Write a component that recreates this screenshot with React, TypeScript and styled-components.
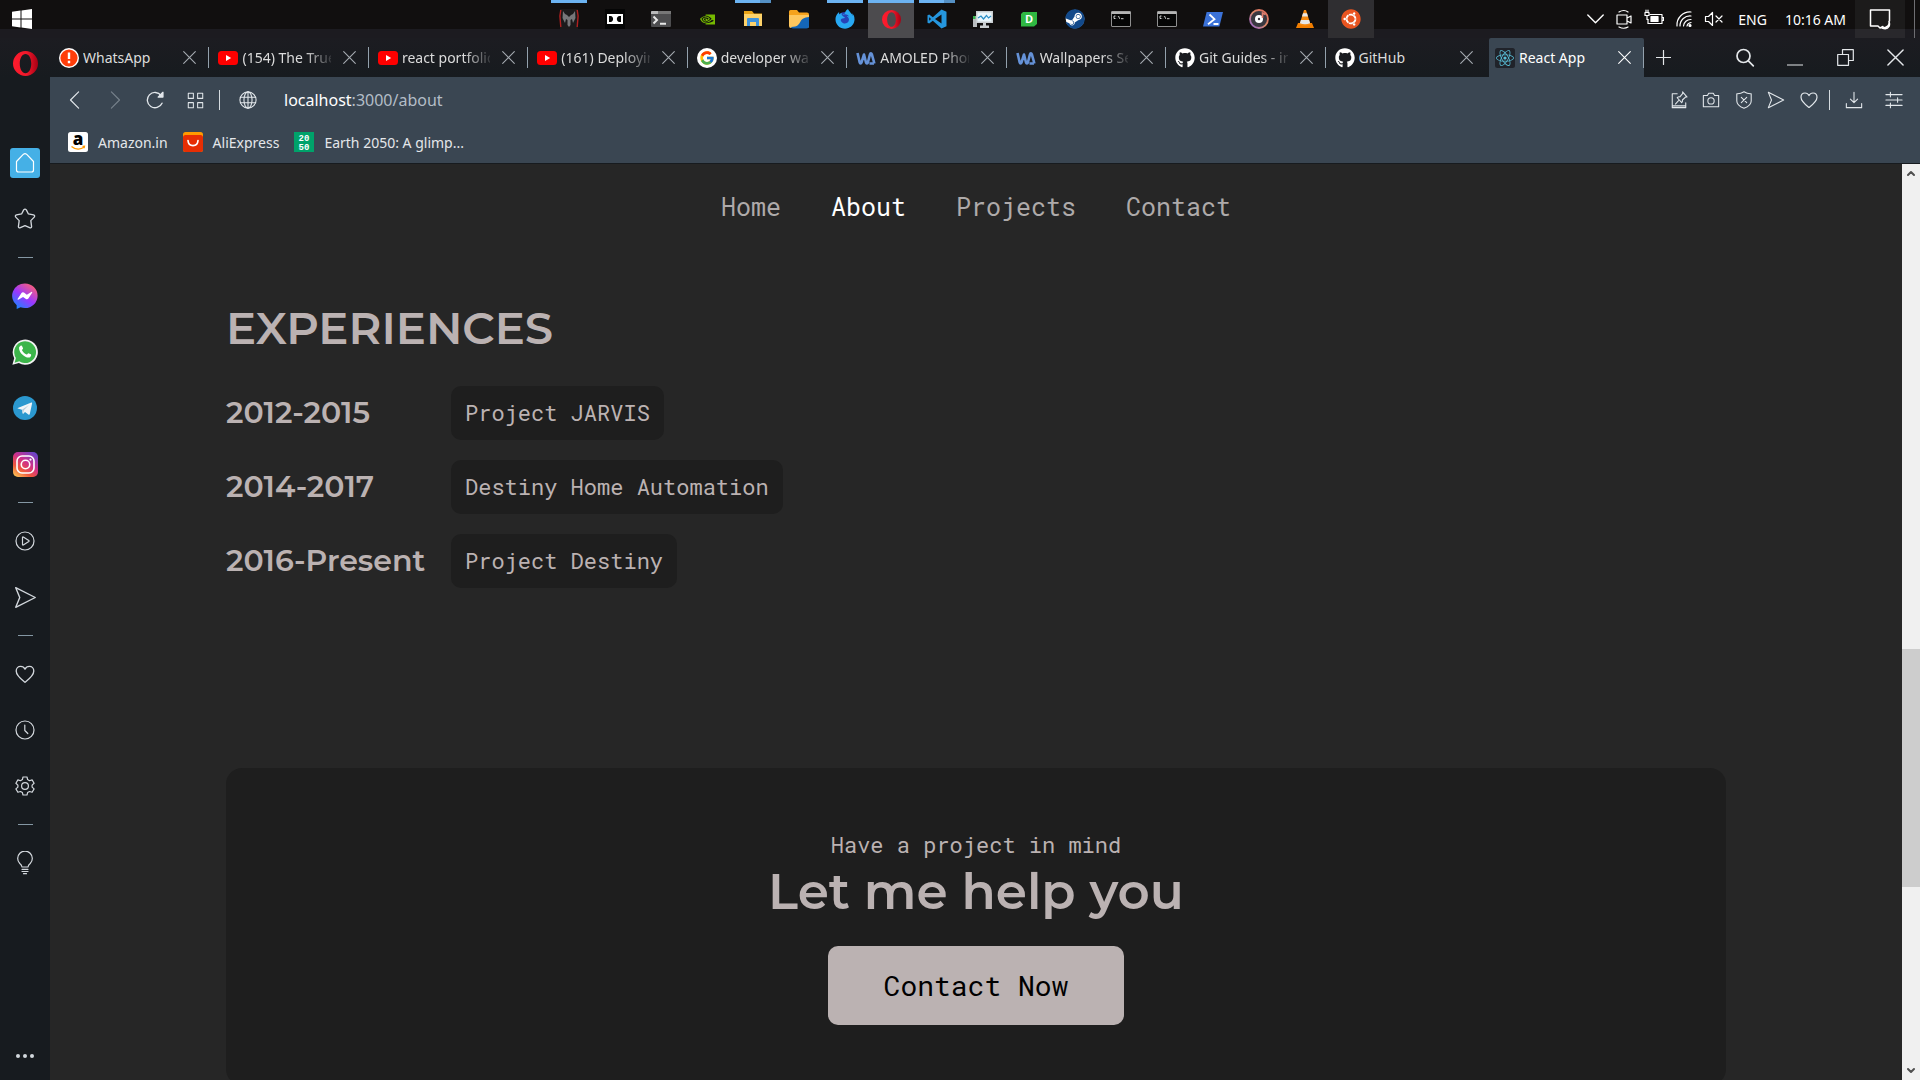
import React from "react";
import styled, { createGlobalStyle, css } from "styled-components";
import { FcGoogle } from "react-icons/fc";
import { FaGithub, FaSteam, FaFirefoxBrowser, FaWhatsapp, FaUbuntu, FaReact } from "react-icons/fa";
import { SiNvidia } from "react-icons/si";

const ui = `"Segoe UI", "Noto Sans", "Open Sans", sans-serif`;
const mono = `"Roboto Mono", "DejaVu Sans Mono", monospace`;
const display = `Montserrat, Inter, sans-serif`;

const Global = createGlobalStyle`
  *, *::before, *::after { box-sizing: border-box; }
  body { margin: 0; background: #262626; overflow: hidden; }
  button { border: 0; margin: 0; padding: 0; background: none; color: inherit; font: inherit; cursor: pointer; }
  a { color: inherit; text-decoration: none; }
  svg { display: block; flex: none; }
  h2, p, ul, dl, dt, dd { margin: 0; padding: 0; }
  ul { list-style: none; }
`;

/* ---------- desktop frame ---------- */

const Desktop = styled.div`
  display: flex;
  flex-direction: column;
  height: 100vh;
  overflow: hidden;
  font-family: ${ui};
  color: #e4e7ea;
`;

const Taskbar = styled.header`
  display: flex;
  flex: none;
  height: 38px;
  background: linear-gradient(#110f0f 29px, #1c1b20 29px);
`;

const TaskSide = styled.div<{ $end?: boolean }>`
  display: flex;
  flex: 1 1 0;
  justify-content: ${(p) => (p.$end ? "flex-end" : "flex-start")};
  color: #fff;
`;

const StartButton = styled.button`
  width: 44px;
  display: grid;
  place-items: center;
`;

const TaskApps = styled.nav`
  display: flex;
`;

const TaskButton = styled.button<{ $active?: boolean; $soft?: boolean }>`
  position: relative;
  display: grid;
  place-items: center;
  width: 46px;
  height: 38px;
  ${(p) => p.$active && css`background: #4c4b4e;`}
  ${(p) => p.$soft && css`background: #2f2e31;`}
`;

const Indicator = styled.span<{ $kind: string }>`
  position: absolute;
  top: 0;
  left: ${(p) => (p.$kind === "wide" ? "0" : "5px")};
  right: ${(p) => (p.$kind === "wide" ? "0" : "5px")};
  height: 3px;
  background: ${(p) =>
    p.$kind === "stack" ? "linear-gradient(90deg, #6cb3f2 25px, #5590c4 25px)" : "#6cb3f2"};
`;

const Tray = styled.div`
  display: flex;
  align-items: center;
  gap: 10px;
  font-size: 14px;
  white-space: nowrap;
  padding-right: 9px;
`;

const Lang = styled.span`
  padding: 0 8px 0 4px;
`;

const Notice = styled.button`
  display: grid;
  place-items: center;
  width: 50px;
  height: 38px;
  background: linear-gradient(#1c1b1b 29px, #29282c 29px);
`;

const PeekLine = styled.span`
  width: 6px;
  margin: 0 0 0 9px;
  border-left: 1px solid #6e6e72;
`;

/* ---------- browser ---------- */

const Browser = styled.div`
  display: flex;
  flex: 1;
  min-height: 0;
`;

const Sidebar = styled.aside`
  display: flex;
  flex-direction: column;
  align-items: center;
  flex: none;
  width: 50px;
  background: linear-gradient(#1c1c21, #171b1f 40px);
  color: #d3d8dd;
`;

const OperaMenu = styled.button`
  display: grid;
  place-items: center;
  width: 50px;
  height: 50px;
  margin-bottom: 9px;
`;

const SideButton = styled.button`
  display: grid;
  place-items: center;
  width: 50px;
  height: 56px;
`;

const HomeTile = styled.span`
  display: grid;
  place-items: center;
  width: 30px;
  height: 30px;
  border-radius: 3px;
  background: #45b0e6;
  color: #fff;
`;

const Divider = styled.hr`
  width: 15px;
  height: 1px;
  margin: 10px 0;
  border: 0;
  background: #8497a3;
`;

const MoreButton = styled(SideButton)`
  margin-top: auto;
  height: 48px;
`;

const SideTop = styled.div`
  display: flex;
  flex-direction: column;
  align-items: center;
`;

const Window = styled.div`
  display: flex;
  flex-direction: column;
  flex: 1;
  min-width: 0;
`;

const TabStrip = styled.div`
  display: flex;
  flex: none;
  height: 39px;
  background: linear-gradient(#1c1c21, #171b1f);
`;

const TabList = styled.div`
  display: flex;
  flex: 1 1 0;
  max-width: 1435px;
  min-width: 0;
`;

const Tab = styled.div<{ $active?: boolean }>`
  position: relative;
  display: flex;
  align-items: center;
  flex: 1 1 0;
  min-width: 0;
  padding-left: 9px;
  font-size: 14px;
  color: #dcdcdc;

  &:not(:last-child)::after {
    content: "";
    width: 1px;
    height: 21px;
    background: #93a1ad;
  }

  ${(p) =>
    p.$active &&
    css`
      flex: 0 0 155px;
      margin-left: 4px;
      padding-left: 6px;
      background: #3a4652;
      border-radius: 2px 2px 0 0;
      color: #fff;
    `}
`;

const TabTitle = styled.button`
  display: flex;
  align-items: center;
  gap: 4px;
  flex: 1;
  min-width: 0;
  white-space: nowrap;
  text-align: left;
`;

const TabText = styled.span<{ $fade?: boolean }>`
  flex: 1;
  overflow: hidden;
  ${(p) => p.$fade && css`mask-image: linear-gradient(90deg, #000 70%, rgba(0, 0, 0, 0.15));`}
`;

const TabClose = styled.button<{ $bright?: boolean }>`
  display: grid;
  place-items: center;
  width: 37px;
  height: 30px;
  color: ${(p) => (p.$bright ? "#fff" : "#a5abb1")};
`;

const NewTab = styled.button`
  display: grid;
  place-items: center;
  width: 38px;
`;

const WindowControls = styled.div`
  display: flex;
  margin-left: auto;
`;

const WindowButton = styled.button`
  display: grid;
  place-items: center;
  width: 50px;
`;

const Toolbar = styled.div`
  flex: none;
  background: #3a4652;
  border-bottom: 1px solid #171b1f;
`;

const AddressRow = styled.div`
  display: flex;
  align-items: center;
  height: 46px;
  padding: 0 6px 0 5px;
  color: #e2e7eb;
`;

const ToolButton = styled.button<{ $w?: number; $dim?: boolean }>`
  display: grid;
  place-items: center;
  width: ${(p) => p.$w ?? 40}px;
  height: 32px;
  color: ${(p) => (p.$dim ? "#76818b" : "#e2e7eb")};
`;

const ToolRule = styled.span`
  width: 1px;
  height: 20px;
  margin: 0 4px;
  background: #d5dbe0;
`;

const Address = styled.div`
  flex: 1;
  padding-left: 12px;
  font-size: 16px;
  color: #b3bdc7;
`;

const Host = styled.span`
  color: #fff;
`;

const Bookmarks = styled.nav`
  display: flex;
  gap: 15px;
  height: 40px;
  padding: 0 18px;
  font-size: 14px;
`;

const Bookmark = styled.a`
  display: flex;
  align-items: center;
  gap: 10px;
  padding-bottom: 2px;
`;

/* ---------- page ---------- */

const Viewport = styled.div`
  display: flex;
  flex: 1;
  min-height: 0;
`;

const Page = styled.main`
  flex: 1;
  min-width: 0;
  overflow: hidden;
  background: #262626;
  color: #bbb2b2;
  font-family: ${mono};
`;

const SiteNav = styled.nav`
  display: flex;
  justify-content: center;
  gap: 50px;
  padding: 26px 0;
  font-size: 25px;
  line-height: 34px;
`;

const NavLink = styled.a<{ $current?: boolean }>`
  color: ${(p) => (p.$current ? "#fff" : "#aeaaaa")};
`;

const Container = styled.div`
  width: 81%;
  max-width: 1500px;
  margin: 0 auto;
`;

const Heading = styled.h2`
  margin: 48px 0 28px;
  font-family: ${display};
  font-size: 45px;
  font-weight: 600;
  line-height: 60px;
`;

const Timeline = styled.dl`
  display: grid;
  grid-template-columns: minmax(200px, max-content) 1fr;
  gap: 20px 25px;
  align-items: center;
  justify-items: start;
`;

const Years = styled.dt`
  font-family: ${display};
  font-size: 30px;
  font-weight: 600;
  line-height: 40px;
`;

const Role = styled.dd`
  padding: 12px 14px;
  border-radius: 10px;
  background: #1e1e1e;
  font-size: 22px;
  line-height: 30px;
`;

const CallToAction = styled.section`
  display: flex;
  flex-direction: column;
  align-items: center;
  margin-top: 180px;
  padding: 60px 0;
  border-radius: 16px;
  background: #1e1e1e;
`;

const Lead = styled.p`
  font-size: 22px;
  line-height: 34px;
`;

const Pitch = styled.h2`
  margin-bottom: 24px;
  font-family: ${display};
  font-size: 50px;
  font-weight: 600;
  line-height: 60px;
`;

const ContactButton = styled.button`
  padding: 20px 56px;
  border-radius: 10px;
  background: #bbb2b2;
  color: #000;
  font-size: 28px;
  line-height: 39px;
`;

const Scrollbar = styled.div`
  display: flex;
  flex-direction: column;
  flex: none;
  width: 18px;
  background: #f0f0f0;
`;

const ScrollArrow = styled.button`
  display: grid;
  place-items: center;
  height: 18px;
  color: #505050;
`;

const Track = styled.div`
  display: grid;
  grid-template-rows: 467fr 238fr 175fr;
  flex: 1;
`;

const Thumb = styled.div`
  grid-row: 2;
  background: #cdcdcd;
`;

/* ---------- drawings ---------- */

type LineProps = { size?: number; w?: number; h?: number; box?: string; sw?: number; children: React.ReactNode };
const Line = ({ size = 20, box = "0 0 20 20", sw = 1.2, w, h, children }: LineProps) => (
  <svg width={w ?? size} height={h ?? size} viewBox={box} fill="none" stroke="currentColor" strokeWidth={sw} strokeLinejoin="round" strokeLinecap="round" aria-hidden="true">
    {children}
  </svg>
);
const Pic = ({ size = 20, children }: { size?: number; children: React.ReactNode }) => (
  <svg width={size} height={size} viewBox="0 0 20 20" aria-hidden="true">{children}</svg>
);

const CrossIcon = ({ size = 13 }: { size?: number }) => (
  <Line size={size} box="0 0 13 13" sw={1.1}><path d="M.7.7l11.6 11.6M12.3.7L.7 12.3" /></Line>
);
const HeartPath = () => (
  <path d="M10 17.5C6.5 14.8 2 11.500 2 7.300 2 4.700 3.800 3 6 3c1.800 0 3.200.9 4 2.600C10.800 3.900 12.200 3 14 3c2.200 0 4 1.700 4 4.300 0 4.200-4.500 7.500-8 10.200z" />
);

const OperaLogo = ({ size = 25, id }: { size?: number; id: string }) => (
  <Pic size={size}>
    <defs>
      <linearGradient id={id} x1="0" x2="1" y1="0" y2="0">
        <stop offset="0" stopColor="#ff1b2d" />
        <stop offset=".55" stopColor="#f0192b" />
        <stop offset="1" stopColor="#a70014" />
      </linearGradient>
    </defs>
    <path fillRule="evenodd" fill={`url(#${id})`} d="M10 0a10 10 0 1 0 0 20 10 10 0 0 0 0-20zm0 2.300c2.700 0 4.600 3.300 4.600 7.700s-1.900 7.700-4.600 7.700S5.400 14.400 5.400 10 7.300 2.300 10 2.300z" />
  </Pic>
);

const YouTube = () => (
  <Pic>
    <rect x="0" y="3" width="20" height="14" rx="3.500" fill="#f00" />
    <path d="M8 7l5.200 3L8 13z" fill="#fff" />
  </Pic>
);
const Alert = () => (
  <Pic>
    <circle cx="10" cy="10" r="10" fill="#fff" />
    <circle cx="10" cy="10" r="8.600" fill="#ff3d0a" />
    <path d="M8.800 4.500h2.400v6.500H8.800zM8.800 12.800h2.400v2.400H8.800z" fill="#fff" />
  </Pic>
);
const Google = () => (
  <Pic>
    <circle cx="10" cy="10" r="10" fill="#fff" />
    <FcGoogle x="2" y="2" width="16" height="16" size={16} />
  </Pic>
);
const WallpaperLogo = () => (
  <Pic>
    <path d="M1.500 5l2.200 9.500c.3 1.200 1.400 1.200 1.800 0L8 6.500l2 8c.4 1.200 1.500 1.200 1.900 0L14 6.200c.3-1.100 1.400-1.100 1.800 0l2.600 9.300M13.500 15.500h4.500" fill="none" stroke="#6592d8" strokeWidth="2.600" strokeLinejoin="round" />
  </Pic>
);
const ReactTile = () => (
  <Pic>
    <rect width="20" height="20" rx="2.500" fill="#20232a" />
    <FaReact x="1" y="1" size={18} color="#58bdd6" />
  </Pic>
);
const GitHub = () => <FaGithub size={20} color="#fff" />;

const Amazon = () => (
  <Pic>
    <rect width="20" height="20" rx="2.500" fill="#fff" />
    <text x="10" y="13" textAnchor="middle" fontFamily="Open Sans, sans-serif" fontWeight="800" fontSize="17" fill="#000">a</text>
    <path d="M3.500 14.500c4 3.200 9 3.200 12.500.8M14.500 14.300l2-.1-.4 2" fill="none" stroke="#f90" strokeWidth="1.300" />
  </Pic>
);
const AliExpress = () => (
  <Pic>
    <rect width="20" height="20" rx="2.500" fill="#ff9a00" />
    <path d="M0 5.500q0-2.500 2.500-2.500h15q2.500 0 2.500 2.500v12q0 2.500-2.500 2.500h-15q-2.500 0-2.500-2.500z" fill="#e62e04" />
    <path d="M5 8.500c.5 6.800 9.500 6.800 10 0" fill="none" stroke="#fff" strokeWidth="1.700" strokeLinecap="round" />
  </Pic>
);
const Earth = () => (
  <Pic>
    <rect width="20" height="20" fill="#00a26a" />
    <g fontFamily="Liberation Mono, monospace" fontWeight="700" fontSize="9" fill="#fff" textAnchor="middle">
      <text x="10" y="9">20</text>
      <text x="10" y="18">50</text>
    </g>
  </Pic>
);

const Predator = () => (
  <Pic>
    <rect x="1" width="18" height="20" fill="#1b1a1b" />
    <path d="M1.800 1l-.9 6 .9 11M18.200 1l.9 6-.9 11" fill="none" stroke="#b02020" strokeWidth="1.400" />
    <path d="M4 2l2 3 2 1 2 2 2-2 2-1 2-3 .5 7-2.500 5-1-4-1.500 1v5L10 18l-1.500-2v-5L7 10l-1 4-2.500-5z" fill="#77777a" />
  </Pic>
);
const Dolby = () => (
  <Pic>
    <rect width="20" height="20" fill="#050505" />
    <rect x="2" y="5" width="16" height="10" fill="#fff" />
    <path d="M4 7h1.500c3.500 0 3.500 6 0 6H4zM16 7h-1.500c-3.500 0-3.500 6 0 6H16z" fill="#050505" />
  </Pic>
);
const Terminal = () => (
  <Pic>
    <rect y="2" width="20" height="16" rx="1" fill="#4d4d4f" />
    <path d="M1 2h18q1 0 1 1v2H0V3q0-1 1-1z" fill="#b9b9ba" />
    <path d="M7 2h13v3H7z" fill="#777" />
    <path d="M2.500 7.500L6 11l-3.500 3.500M9 14.700h6" fill="none" stroke="#e8e8e8" strokeWidth="2" />
  </Pic>
);
const Explorer = () => (
  <Pic>
    <path d="M1 2h8l2 2.500h8V8H1z" fill="#e8a317" />
    <path d="M1 5h18v12H1z" fill="#fdd26a" />
    <path d="M4 17v-7q0-1 1-1h10q1 0 1 1v7h-3v-4H7v4z" fill="#3f93dc" />
  </Pic>
);
const FilesApp = () => (
  <Pic>
    <path d="M0 2.500Q0 1 1.500 1H8l2 2.500h8q2 0 2 2V12H0z" fill="#f5a21c" />
    <path d="M0 6h20v11q0 2-2 2H2q-2 0-2-2z" fill="#fec75e" />
    <path d="M2 18c7 0 8-3 9.500-5.500S15 8.500 20 8v9q0 2.500-2.500 2.500H4Q2.500 19.500 2 18z" fill="#1466b8" />
  </Pic>
);
const Firefox = () => (
  <Pic>
    <circle cx="10" cy="11" r="8" fill="#2743b8" />
    <FaFirefoxBrowser size={20} color="#27a8f2" />
  </Pic>
);
const VSCode = () => (
  <Pic>
    <path d="M14.500.5L5.800 8.300 2.200 5.500.5 6.300v7.400l1.700.8 3.600-2.800 8.700 7.800 5-2.300V2.800zM2.200 11.800V8.200L4 10zM8 10l6.500-4.600v9.200z" fillRule="evenodd" fill="#2596dd" />
  </Pic>
);
const Monitor = () => (
  <Pic>
    <path d="M0 7h4v11H0z" fill="#b9bdbf" />
    <path d="M0 7h2.500v3H0z" fill="#36b24a" />
    <rect x="3" y="2" width="17" height="12" fill="#c9ced1" />
    <rect x="4.500" y="3.500" width="14" height="9" fill="#eaf6fc" />
    <path d="M5 9l3-2 2.500 3 3-3.500 2 2.500 2.500-2" fill="none" stroke="#2a8fc7" strokeWidth="1.200" />
    <path d="M10 14h3v2.500h3V19H7v-2.500h3z" fill="#c9ced1" />
  </Pic>
);
const DApp = () => (
  <Pic>
    <path d="M2 5l2-2h14v12l-3 2.500H2z" fill="#2fb842" />
    <text x="10" y="14" textAnchor="middle" fontFamily="Open Sans, sans-serif" fontWeight="700" fontSize="11" fill="#fff">D</text>
  </Pic>
);
const Steam = () => (
  <Pic>
    <circle cx="10" cy="10" r="9.300" fill="#fff" />
    <FaSteam size={20} color="#12498a" />
  </Pic>
);
const Cmd = () => (
  <Pic>
    <rect x=".5" y="2.500" width="19" height="15" rx=".5" fill="#050505" stroke="#8f8f8f" />
    <path d="M.5 2.500h19v2.500H.5z" fill="#b5b5b5" />
    <path d="M4.500 7H3v2.500h1.500M6 7.500v.2M6 9.300v.2M7.500 7l1.200 2.800M10 9.700h2.500" stroke="#e6e6e6" fill="none" strokeWidth=".9" />
  </Pic>
);
const PowerShell = () => (
  <Pic>
    <path d="M3.600 3H20l-3.600 14.500H0z" fill="#3b72d8" />
    <path d="M6.500 5.500l5 4.700-6.500 5M10.500 15h5" fill="none" stroke="#fff" strokeWidth="1.800" />
  </Pic>
);
const MusicApp = () => (
  <Pic>
    <defs>
      <linearGradient id="music" x1="0" x2="1" y1="1" y2="0">
        <stop offset="0" stopColor="#8e62d6" />
        <stop offset=".5" stopColor="#d98a6a" />
        <stop offset="1" stopColor="#e46a5c" />
      </linearGradient>
    </defs>
    <circle cx="10" cy="10" r="9" fill="#3a3840" stroke="url(#music)" strokeWidth="1.800" />
    <circle cx="10" cy="10" r="4" fill="#fff" />
    <circle cx="10" cy="10" r="1.200" fill="#3a3840" />
    <path d="M13.500 9V4l3 1.500" fill="none" stroke="#e08070" strokeWidth="1.600" />
  </Pic>
);
const Vlc = () => (
  <Pic>
    <path d="M3 14h14l2 5H1z" fill="#f07d00" />
    <path d="M9 1h2l4.500 14.500q-5.500 2.500-11 0z" fill="#f58a12" />
    <path d="M8 4.200h4l1 3.300H7zM5.900 11h8.200l1 3.200q-5 2-10.200 0z" fill="#e8e8e8" />
  </Pic>
);
const Ubuntu = () => (
  <Pic>
    <circle cx="10" cy="10" r="9" fill="#fff" />
    <FaUbuntu size={20} color="#e95420" />
  </Pic>
);

const Messenger = () => (
  <Pic size={26}>
    <defs>
      <linearGradient id="msgr" x1=".1" x2=".8" y1="1" y2="0">
        <stop offset="0" stopColor="#0a8dff" />
        <stop offset=".5" stopColor="#9b37ff" />
        <stop offset="1" stopColor="#ff6270" />
      </linearGradient>
    </defs>
    <path d="M10 .3a9.700 9.500 0 0 1 0 19q-1.800 0-3.400-.6L3.600 20v-2.900A9.700 9.500 0 0 1 10 .3z" fill="url(#msgr)" />
    <path d="M4.300 12.400l3-4.700q.8-1 1.900-.3l2.200 1.700 3.800-2.300q.6 0 .3.700l-2.900 4.500q-.8 1-1.900.3L8.500 10.700l-3.700 2.200q-.7.100-.5-.5z" fill="#fff" />
  </Pic>
);
const WhatsApp = () => (
  <Pic size={26}>
    <path d="M.3 19.800l1.400-5A9.700 9.700 0 1 1 5.300 18.500z" fill="#f2f2f2" />
    <path d="M2 18.200l1-3.600A8.400 8.400 0 1 1 5.600 17.200z" fill="#3cb54a" />
    <path d="M6.600 5.200c.5-.3 1-.2 1.200.3l.7 1.700c.1.500-.8 1.200-.8 1.500.7 1.500 1.900 2.600 3.500 3.300.5 0 1-1.100 1.400-1.100l1.900.9c.6.400 0 1.800-.6 2.200-2.500 1.500-8.600-2.800-8.500-7.100 0-.7.600-1.400 1.200-1.700z" fill="#fff" />
  </Pic>
);
const Telegram = () => (
  <Pic size={24}>
    <circle cx="10" cy="10" r="10" fill="#2b98cf" />
    <path d="M4 10l11.300-4.500q.8-.2.600.8l-1.900 8.700q-.3 1-1.200.4L10 13.300l-1.400 1.400q-.6.400-.7-.5L7.500 11.500 4 10.400q-.4-.2 0-.4z" fill="#f1f5f8" />
    <path d="M7.500 11.500l5.800-4L9 11.900l-.6 2.600z" fill="#b8ccd9" />
  </Pic>
);
const Instagram = () => (
  <Pic size={25}>
    <defs>
      <linearGradient id="insta" x1=".1" x2=".8" y1="1" y2="0">
        <stop offset="0" stopColor="#fdc856" />
        <stop offset=".3" stopColor="#f0583c" />
        <stop offset=".6" stopColor="#cf2f8a" />
        <stop offset="1" stopColor="#6a45c9" />
      </linearGradient>
    </defs>
    <rect width="20" height="20" rx="4" fill="url(#insta)" />
    <g fill="none" stroke="#fff" strokeWidth="1.300">
      <rect x="3.200" y="3.200" width="13.600" height="13.600" rx="4" />
      <circle cx="10" cy="10" r="3.400" />
    </g>
    <circle cx="14" cy="6" r=".9" fill="#fff" />
  </Pic>
);

const SendIcon = ({ size = 20 }: { size?: number }) => (
  <Line size={size}><path d="M1.500 1.500L18.500 10l-17 8.500L5 10z" /></Line>
);

const taskApps: { name: string; icon: React.ReactNode; mark?: string; active?: boolean; soft?: boolean }[] = [
  { name: "PredatorSense", icon: <Predator />, mark: "full" },
  { name: "Dolby Access", icon: <Dolby /> },
  { name: "Windows Terminal", icon: <Terminal /> },
  { name: "NVIDIA", icon: <SiNvidia size={15} color="#76b900" /> },
  { name: "File Explorer", icon: <Explorer />, mark: "stack" },
  { name: "Files", icon: <FilesApp /> },
  { name: "Firefox", icon: <Firefox />, mark: "full" },
  { name: "Opera", icon: <OperaLogo size={19} id="opera-task" />, mark: "wide", active: true },
  { name: "Visual Studio Code", icon: <VSCode />, mark: "stack" },
  { name: "Performance Monitor", icon: <Monitor /> },
  { name: "Dashboard", icon: <DApp /> },
  { name: "Steam", icon: <Steam /> },
  { name: "Command Prompt", icon: <Cmd /> },
  { name: "Developer Prompt", icon: <Cmd /> },
  { name: "PowerShell", icon: <PowerShell /> },
  { name: "Music", icon: <MusicApp /> },
  { name: "VLC", icon: <Vlc /> },
  { name: "Ubuntu", icon: <Ubuntu />, soft: true },
];

const tabs = [
  { title: "WhatsApp", icon: <Alert /> },
  { title: "(154) The True", icon: <YouTube />, fade: true },
  { title: "react portfolio", icon: <YouTube />, fade: true },
  { title: "(161) Deploying", icon: <YouTube />, fade: true },
  { title: "developer wallpaper", icon: <Google />, fade: true },
  { title: "AMOLED Phone", icon: <WallpaperLogo />, fade: true },
  { title: "Wallpapers Search", icon: <WallpaperLogo />, fade: true },
  { title: "Git Guides - install", icon: <GitHub />, fade: true },
  { title: "GitHub", icon: <GitHub /> },
];

const experiences = [
  ["2012-2015", "Project JARVIS"],
  ["2014-2017", "Destiny Home Automation"],
  ["2016-Present", "Project Destiny"],
];

const SystemTaskbar = () => (
  <Taskbar>
    <TaskSide>
      <StartButton aria-label="Start">
        <Pic>
          <path d="M0 2.800L8.500 1.600V9.500H0zM9.500 1.400L20 0v9.500H9.500zM0 10.500h8.500v7.900L0 17.200zM9.500 10.500H20V20L9.500 18.600z" fill="#fff" />
        </Pic>
      </StartButton>
    </TaskSide>
    <TaskApps aria-label="Taskbar">
      {taskApps.map((a) => (
        <TaskButton key={a.name} aria-label={a.name} $active={a.active} $soft={a.soft}>
          {a.mark && <Indicator $kind={a.mark} />}
          {a.icon}
        </TaskButton>
      ))}
    </TaskApps>
    <TaskSide $end>
      <Tray>
        <Line w={17} h={20} box="0 0 17 20" sw={1.4}><path d="M.8 6l7.700 7.700L16.200 6" /></Line>
        <Line><path d="M3 6h10v9H3zM13 9l4-2v7l-4-2M5 3q5-3 9 0M5 18q5 2.500 9 0" /></Line>
        <Line>
          <path d="M6 5.500h12v9H4v-4M18.200 8.500h1.300v3h-1.300" />
          <path d="M1 3.500h4v3H1zM2 3.500V1M4 3.500V1M3 6.500v4h1" />
          <path d="M7 7.500h7v5H7z" fill="currentColor" />
        </Line>
        <Line>
          <path d="M3 17A13 13 0 0 1 17 3M6 17A10 10 0 0 1 17 7M9.500 17A7 7 0 0 1 17 10.500M13 17q.5-3 4-3.500" />
          <circle cx="16" cy="16.500" r="1" fill="currentColor" />
        </Line>
        <Line><path d="M1.500 7.500h3l4-4v13l-4-4h-3zM12 7l6 6M18 7l-6 6" /></Line>
        <Lang>ENG</Lang>
        <time>10:16 AM</time>
      </Tray>
      <Notice aria-label="Notifications">
        <Line w={22} h={22} box="0 0 22 22" sw={1.500}>
          <path d="M14 18.500l-3 1.500-2-2H1.500v-16h19V13" />
          <path d="M20 13.500q1 6-7 6.500 5 2 7-1.500 1-2.500 0-5z" />
        </Line>
      </Notice>
      <PeekLine />
    </TaskSide>
  </Taskbar>
);

const OperaSidebar = () => (
  <Sidebar>
    <SideTop>
      <OperaMenu aria-label="Opera menu"><OperaLogo id="opera-side" /></OperaMenu>
    </SideTop>
    <SideTop>
      <Spacer />
      <SideButton aria-label="Home">
        <HomeTile>
          <Line><path d="M1.500 8.500L8.500 1.200q1.500-1 3 0l7 7.300v8.500q0 2-2 2h-13q-2 0-2-2z" /></Line>
        </HomeTile>
      </SideButton>
      <SideButton aria-label="Bookmarks">
        <Line size={22}>
          <path d="M8.800 1.700q1.200-1.400 2.400 0l1.900 3.700 4.600.8q1.700.7.700 2.100l-3.100 3.200.7 5.400q-.2 1.500-1.800 1L10 16l-4.200 1.900q-1.600.5-1.800-1l.7-5.400-3.100-3.200q-1-1.400.7-2.100l4.600-.8z" />
        </Line>
      </SideButton>
      <Divider />
      <SideButton aria-label="Messenger"><Messenger /></SideButton>
      <SideButton aria-label="WhatsApp"><WhatsApp /></SideButton>
      <SideButton aria-label="Telegram"><Telegram /></SideButton>
      <SideButton aria-label="Instagram"><Instagram /></SideButton>
      <Divider />
      <SideButton aria-label="Player">
        <Line><circle cx="10" cy="10" r="9" /><path d="M7.500 6.500q0-.8.800-.5l5.500 3.500q.6.500 0 1L8.300 14q-.8.300-.8-.5z" /></Line>
      </SideButton>
      <SideButton aria-label="My Flow"><SendIcon size={23} /></SideButton>
      <Divider />
      <SideButton aria-label="Favourites"><Line size={22}><HeartPath /></Line></SideButton>
      <SideButton aria-label="History">
        <Line><circle cx="10" cy="10" r="9" /><path d="M9.800 5v5.500l3 3" /></Line>
      </SideButton>
      <SideButton aria-label="Settings">
        <Line>
          <path d="M8 1h4l.6 2.600 1.900 1.100 2.600-.8 2 3.400-2 1.800v2l2 1.800-2 3.400-2.600-.8-1.900 1.100L12 19H8l-.6-2.400-1.900-1.100-2.600.8-2-3.400 2-1.800v-2l-2-1.800 2-3.400 2.600.8 1.900-1.100z" />
          <circle cx="10" cy="10" r="3.400" />
        </Line>
      </SideButton>
      <Divider />
      <SideButton aria-label="Tips">
        <Line w={20} h={24} box="0 0 20 24">
          <path d="M7 16q-.3-2-2.200-3.500A7.300 7.300 0 1 1 15.200 12.500Q13.300 14 13 16zM7 18.300h6M7 20.500h6M8.500 22.700h3" />
        </Line>
      </SideButton>
    </SideTop>
    <MoreButton aria-label="More">
      <svg width="20" height="6" viewBox="0 0 20 6" fill="currentColor" aria-hidden="true">
        <circle cx="3" cy="3" r="2" /><circle cx="10" cy="3" r="2" /><circle cx="17" cy="3" r="2" />
      </svg>
    </MoreButton>
  </Sidebar>
);

const Spacer = styled.div`
  height: 38px;
`;

const BrowserTabs = () => (
  <TabStrip>
    <TabList>
      {tabs.map((t, i) => (
        <Tab key={i}>
          <TabTitle>{t.icon}<TabText $fade={t.fade}>{t.title}</TabText></TabTitle>
          <TabClose aria-label={`Close ${t.title}`}><CrossIcon /></TabClose>
        </Tab>
      ))}
    </TabList>
    <Tab $active>
      <TabTitle><ReactTile /><TabText>React App</TabText></TabTitle>
      <TabClose $bright aria-label="Close React App"><CrossIcon /></TabClose>
    </Tab>
    <NewTab aria-label="New tab"><Line size={15} box="0 0 15 15"><path d="M7.500.5v14M.5 7.500h14" /></Line></NewTab>
    <WindowControls>
      <WindowButton aria-label="Search tabs"><Line sw={1.700}><circle cx="8.500" cy="8" r="6.500" /><path d="M13.300 12.800l5 5" /></Line></WindowButton>
      <WindowButton aria-label="Minimize"><Line size={16} box="0 0 16 16"><path d="M.5 15h15" /></Line></WindowButton>
      <WindowButton aria-label="Restore"><Line size={17} box="0 0 17 17"><path d="M.7 5.500h10.800v10.800H.7zM5.500 5.500V.7h10.800v10.800h-4.800" /></Line></WindowButton>
      <WindowButton aria-label="Close window"><CrossIcon size={17} /></WindowButton>
    </WindowControls>
  </TabStrip>
);

const BrowserToolbar = () => (
  <Toolbar>
    <AddressRow>
      <ToolButton aria-label="Back"><Line size={18} sw={1.300}><path d="M14 1L5 10l9 9" /></Line></ToolButton>
      <ToolButton aria-label="Forward" $dim><Line size={18} sw={1.300}><path d="M6 1l9 9-9 9" /></Line></ToolButton>
      <ToolButton aria-label="Reload"><Line size={18} sw={1.500}><path d="M17.800 13.500A8.500 8.500 0 1 1 16.800 5" /><path d="M18.800 1.500v5.300h-5.300z" fill="currentColor" /></Line></ToolButton>
      <ToolButton aria-label="Tab islands"><Line size={17}><path d="M1.500 1.500h6v6h-6zM12.500 1.500h6v6h-6zM1.500 12.500h6v6h-6zM12.500 12.500h6v6h-6z" /></Line></ToolButton>
      <ToolRule />
      <ToolButton aria-label="Site information" $w={48}>
        <Line size={18}><circle cx="10" cy="10" r="9" /><ellipse cx="10" cy="10" rx="4.500" ry="9" /><path d="M10 1v18M1.500 7h17M1.500 13h17" /></Line>
      </ToolButton>
      <Address><Host>localhost</Host>:3000/about</Address>
      <ToolButton aria-label="Easy files" $w={33}>
        <Line size={18}><path d="M8 3H2.500v15.500h15V13M2.500 16.500h15M6 14.500l3.500-3.700M8 7.500l5 5.500c1-1 1-2 .8-3l3.700-3.500 1.500.2-5-5.700.2 1.700L11 6.500C10 6.300 9 6.500 8 7.500z" /></Line>
      </ToolButton>
      <ToolButton aria-label="Snapshot" $w={32}>
        <Line size={18}><path d="M1.500 5H6l1.500-2.500h5L14 5h4.500v12.500h-17z" /><circle cx="10" cy="11" r="3.500" /></Line>
      </ToolButton>
      <ToolButton aria-label="Ad blocker" $w={33}>
        <Line size={18}><path d="M10 .8q4 2.500 8 2.200v8q0 5-8 8.200-8-3.200-8-8.200V3q4 .3 8-2.200zM7 7l6 6M13 7l-6 6" /></Line>
      </ToolButton>
      <ToolButton aria-label="Send to My Flow" $w={32}><SendIcon size={18} /></ToolButton>
      <ToolButton aria-label="Add to favourites" $w={33}><Line size={20}><HeartPath /></Line></ToolButton>
      <ToolRule />
      <ToolButton aria-label="Downloads">
        <Line size={18}><path d="M10 1.500v11M6 9l4 4 4-4M1.500 14v4.500h17V14" /></Line>
      </ToolButton>
      <ToolButton aria-label="Easy setup">
        <Line size={18}><path d="M1 4h18M1 10h18M1 16h18M6 1.500v5M14 7.500v5M6 13.500v5" /></Line>
      </ToolButton>
    </AddressRow>
    <Bookmarks aria-label="Bookmarks">
      <Bookmark href="#amazon"><Amazon />Amazon.in</Bookmark>
      <Bookmark href="#aliexpress"><AliExpress />AliExpress</Bookmark>
      <Bookmark href="#earth"><Earth />Earth 2050: A glimp...</Bookmark>
    </Bookmarks>
  </Toolbar>
);

const AboutPage = () => (
  <Page>
    <SiteNav>
      <NavLink href="#home">Home</NavLink>
      <NavLink href="#about" $current aria-current="page">About</NavLink>
      <NavLink href="#projects">Projects</NavLink>
      <NavLink href="#contact">Contact</NavLink>
    </SiteNav>
    <Container>
      <Heading>EXPERIENCES</Heading>
      <Timeline>
        {experiences.map(([years, role]) => (
          <React.Fragment key={years}>
            <Years>{years}</Years>
            <Role>{role}</Role>
          </React.Fragment>
        ))}
      </Timeline>
      <CallToAction>
        <Lead>Have a project in mind</Lead>
        <Pitch>Let me help you</Pitch>
        <ContactButton>Contact Now</ContactButton>
      </CallToAction>
    </Container>
  </Page>
);

export default function App() {
  return (
    <Desktop>
      <Global />
      <SystemTaskbar />
      <Browser>
        <OperaSidebar />
        <Window>
          <BrowserTabs />
          <BrowserToolbar />
          <Viewport>
            <AboutPage />
            <Scrollbar>
              <ScrollArrow aria-label="Scroll up"><Line size={8} box="0 0 8 8" sw={2}><path d="M1 6l3-3 3 3" /></Line></ScrollArrow>
              <Track><Thumb /></Track>
              <ScrollArrow aria-label="Scroll down"><Line size={8} box="0 0 8 8" sw={2}><path d="M1 2l3 3 3-3" /></Line></ScrollArrow>
            </Scrollbar>
          </Viewport>
        </Window>
      </Browser>
    </Desktop>
  );
}
